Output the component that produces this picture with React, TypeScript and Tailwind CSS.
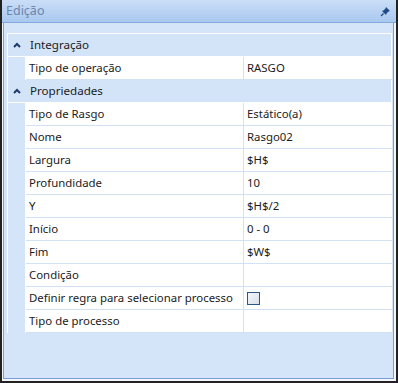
import React from "react";

type Row = { label: string; value?: string; check?: boolean };

const groups: { title: string; rows: Row[] }[] = [
  { title: "Integração", rows: [{ label: "Tipo de operação", value: "RASGO" }] },
  {
    title: "Propriedades",
    rows: [
      { label: "Tipo de Rasgo", value: "Estático(a)" },
      { label: "Nome", value: "Rasgo02" },
      { label: "Largura", value: "$H$" },
      { label: "Profundidade", value: "10" },
      { label: "Y", value: "$H$/2" },
      { label: "Início", value: "0 - 0" },
      { label: "Fim", value: "$W$" },
      { label: "Condição", value: "" },
      { label: "Definir regra para selecionar processo", check: true },
      { label: "Tipo de processo", value: "" },
    ],
  },
];

function Caret() {
  return (
    <svg width="8" height="6" viewBox="0 0 8 6" className="ml-[5px] mr-[9px]">
      <path d="M1 5 L4 2 L7 5" fill="none" stroke="#1c3a6b" strokeWidth="2" />
    </svg>
  );
}

function Pin() {
  return (
    <svg width="12" height="12" viewBox="0 0 12 12">
      <path d="M6 2 L10 6 L8.5 6.5 L6.5 8.5 L6 10 L2 6 L3.5 5.5 L5.5 3.5 Z" fill="#1f4a8a" />
      <path d="M3.5 8.5 L1 11" stroke="#1f4a8a" strokeWidth="1.3" />
    </svg>
  );
}

export default function App() {
  return (
    <div
      className="w-[398px] h-[383px] flex flex-col bg-[#f3f7fc] border-l-2 border-r-2 border-b-2 border-[#222] text-[11.4px] text-[#1b1b1b]"
      style={{ fontFamily: '"Segoe UI", "Noto Sans", sans-serif' }}
    >
      <div className="h-[23px] shrink-0 flex items-center justify-between pl-[4px] pr-[4px] bg-gradient-to-b from-[#cadef7] to-[#a9c8ef] border-b border-[#86a9dc]">
        <span className="text-[12.5px] text-[#6c87ab]">Edição</span>
        <Pin />
      </div>
      <div className="flex-1 ml-px mr-[2px] mb-[2px] border-l border-r border-b border-[#7a9fd6] bg-[#d5e5f9] pt-[10px] pl-[3px] pr-px">
        <div className="border-l border-t border-white">
          {groups.map((g) => (
            <div key={g.title}>
              <div className="h-[23px] flex items-center bg-[#d4e4f8] border-b border-white border-r">
                <Caret />
                <span className="text-[11.6px]">{g.title}</span>
              </div>
              {g.rows.map((r) => (
                <div key={r.label} className="h-[23px] flex">
                  <div className="w-[18px] shrink-0 border-r border-white" />
                  <div className="w-[218px] shrink-0 bg-white border-b border-r border-[#d3e1f4] pl-[3px] flex items-center whitespace-nowrap">
                    {r.label}
                  </div>
                  <div className="flex-1 bg-white border-b border-[#d3e1f4] pl-[3px] flex items-center">
                    {r.check ? (
                      <span className="w-[13px] h-[13px] border border-[#2a5889] bg-gradient-to-br from-[#f4f6fa] to-[#d9dfea]" />
                    ) : (
                      r.value
                    )}
                  </div>
                </div>
              ))}
            </div>
          ))}
        </div>
      </div>
    </div>
  );
}
